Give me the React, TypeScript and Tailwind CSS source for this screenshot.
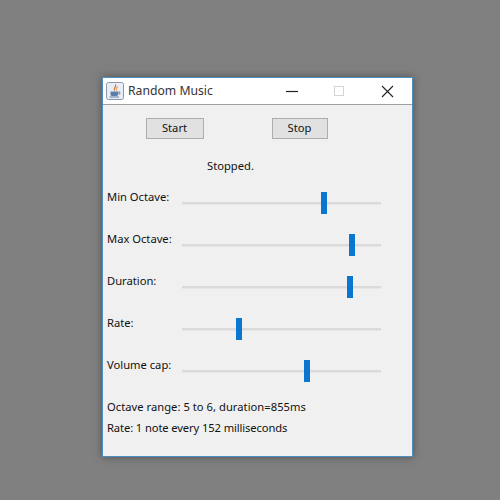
const sliders = [
  { label: "Min Octave:", pos: 139 },
  { label: "Max Octave:", pos: 167 },
  { label: "Duration:", pos: 165 },
  { label: "Rate:", pos: 54 },
  { label: "Volume cap:", pos: 122 },
];

function JavaIcon() {
  return (
    <svg width="18" height="18" viewBox="0 0 18 18" className="shrink-0">
      <rect x="0.5" y="0.5" width="17" height="17" rx="2" fill="#e9eef4" stroke="#8d99a8" />
      <path d="M9.5 2.5C11 5 7.5 6 8.5 8.5C7 6.5 10 5 9.5 2.5Z" fill="#d9702a" stroke="#d9702a" strokeWidth="0.8" />
      <path d="M11.5 4.5C10.5 6 10 7 10.5 8.5" fill="none" stroke="#d9702a" strokeWidth="0.9" />
      <path d="M4.5 9.5H12V12.5C12 13.5 11 14 10 14H6.5C5.5 14 4.5 13.5 4.5 12.5Z" fill="#5c7fa8" />
      <path d="M12 10H13.8V12H12" fill="none" stroke="#5c7fa8" strokeWidth="0.9" />
      <path d="M3.5 15H13" stroke="#5c7fa8" strokeWidth="1" />
    </svg>
  );
}

export default function App() {
  return (
    <div className="w-[500px] h-[500px] bg-[#808080] pt-[77px] pl-[102px] font-['Noto_Sans','Open_Sans',sans-serif] text-[11.2px] text-[#111111] overflow-hidden">
      <div className="w-[311px] h-[380px] border border-[#4f8fc0] bg-[#f0f0f0] flex flex-col shadow-[0_0_8px_rgba(40,40,40,0.55)]">
        <div className="h-[27px] shrink-0 bg-white border-b border-[#a0a0a0] flex items-center pl-[3px]">
          <JavaIcon />
          <span className="ml-[4px] text-[12.2px] text-[#333333]">Random Music</span>
          <div className="ml-auto flex items-center">
            <svg width="12" height="12" viewBox="0 0 12 12" className="mr-[36px]">
              <path d="M0 6.5H12" stroke="#222222" strokeWidth="1.2" />
            </svg>
            <div className="w-[10px] h-[10px] border border-[#d4d4d4] mr-[37px]" />
            <svg width="13" height="13" viewBox="0 0 13 13" className="mr-[18px]">
              <path d="M1 1L12 12M12 1L1 12" stroke="#222222" strokeWidth="1.1" />
            </svg>
          </div>
        </div>
        <div className="flex flex-col">
          <div className="flex pt-[13px] pl-[43px]">
            <div className="w-[58px] h-[21px] border border-[#adadad] bg-[#e1e1e1] flex items-center justify-center pb-[1px] pr-[1px]">Start</div>
            <div className="w-[56px] h-[21px] border border-[#adadad] bg-[#e1e1e1] flex items-center justify-center ml-[68px] pb-[1px] pr-[1px]">Stop</div>
          </div>
          <div className="pl-[104px] mt-[18px] h-[17px] leading-[17px]">Stopped.</div>
          <div className="flex flex-col mt-[18px] gap-[20px]">
            {sliders.map((s) => (
              <div key={s.label} className="flex h-[22px] pl-[4px]">
                <div className="w-[75px] h-[16px] leading-[16px] mt-[-3px]">{s.label}</div>
                <div className="relative w-[199px] h-[22px] flex items-center">
                  <div className="w-full h-[3px] bg-[#dadada] border-b border-[#e6e6e6]" />
                  <div className="absolute top-0 w-[6px] h-[22px] bg-[#0b76cf]" style={{ left: s.pos }} />
                </div>
              </div>
            ))}
          </div>
          <div className="pl-[4px] mt-[16px] h-[18px] leading-[18px] tracking-[0.03px]">Octave range: 5 to 6, duration=855ms</div>
          <div className="pl-[4px] mt-[3px] h-[18px] leading-[18px] tracking-[-0.11px]">Rate: 1 note every 152 milliseconds</div>
        </div>
      </div>
    </div>
  );
}
